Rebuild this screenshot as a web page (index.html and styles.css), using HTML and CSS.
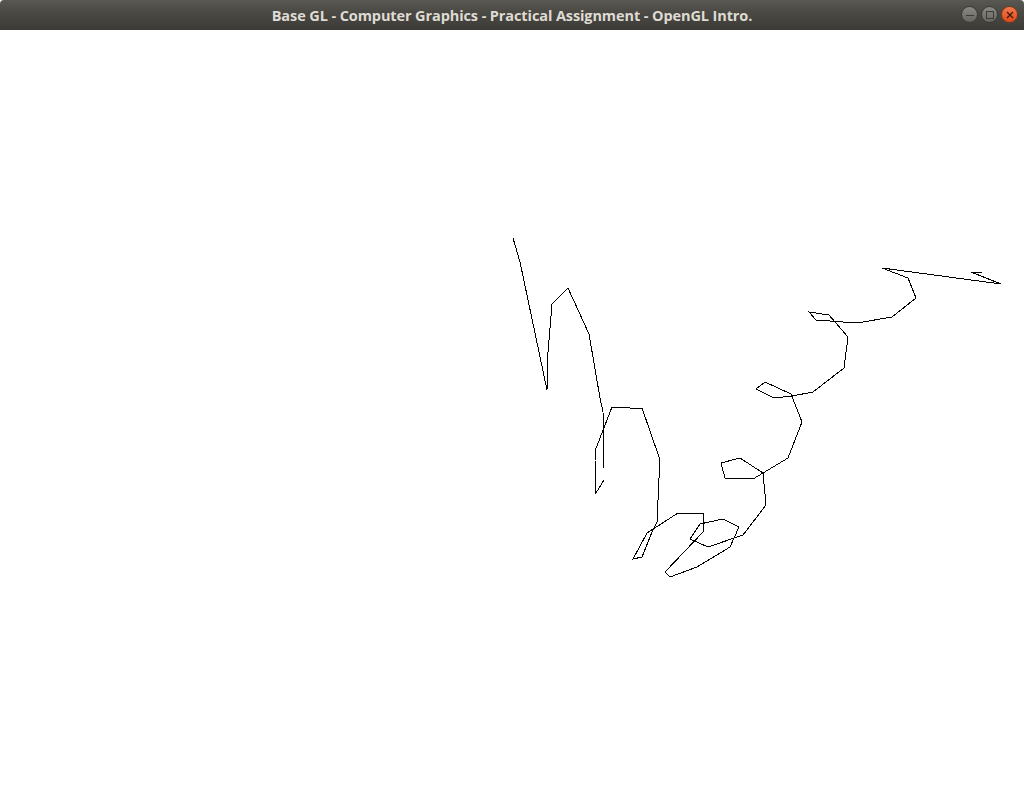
FILE: index.html
```html
<!DOCTYPE html>
<html>
<head>
<meta charset="utf-8">
<link rel="stylesheet" href="styles.css">
</head>
<body>
<div class="window">
  <div class="titlebar">
    <div class="title">Base GL - Computer Graphics - Practical Assignment - OpenGL Intro.</div>
    <div class="controls">
      <span class="btn btn-min"><svg width="8" height="8" viewBox="0 0 8 8"><line x1="0" y1="4.5" x2="8" y2="4.5" stroke="#3c3b37" stroke-width="1"/></svg></span>
      <span class="btn btn-max"><svg width="8" height="8" viewBox="0 0 8 8"><rect x="0.5" y="0.5" width="7" height="7" fill="none" stroke="#3c3b37" stroke-width="1"/></svg></span>
      <span class="btn btn-close"><svg width="8" height="8" viewBox="0 0 8 8"><path d="M1 1 L7 7 M7 1 L1 7" stroke="#3c1a0c" stroke-width="1.3"/></svg></span>
    </div>
  </div>
  <div class="canvas">
    <svg class="gl" width="1024" height="768" viewBox="0 0 1024 768">
      <polyline fill="none" stroke="#000" stroke-width="1" stroke-linejoin="miter" points="513,208 520,232 547,360 548,322 552,274 568,258 589,304 600,368 603,382 604,438 604,450 596,463 595,430 595,421 612,377 630,378 642,378 659,427 659,448 657,492 652,502 642,527 633,529 647,503 678,483 703,483 703,502 665,542 670,547 697,537 730,517 739,497 723,489 700,494 690,509 708,517 743,505 766,475 763,443 753,449 725,448 721,433 740,428 763,443 788,428 802,392 791,364 765,352 756,359 774,368 792,366 813,362 844,338 848,307 829,285 809,282 816,290 857,293 892,287 916,268 908,248 882,238 1001,254 971,242 982,242"/>
    </svg>
  </div>
</div>
</body>
</html>
```

FILE: styles.css
```css
html, body {
  margin: 0;
  padding: 0;
  background: #ffffff;
}

.window {
  width: 1024px;
  height: 798px;
  display: flex;
  flex-direction: column;
  overflow: hidden;
}

.titlebar {
  height: 30px;
  flex: 0 0 30px;
  background: linear-gradient(to bottom, #5a5852 0%, #4a4944 40%, #3c3b37 100%);
  border-radius: 4px 4px 0 0;
  display: flex;
  align-items: center;
  justify-content: center;
  position: relative;
  box-sizing: border-box;
}

.title {
  font-family: "Open Sans", "DejaVu Sans", sans-serif;
  font-weight: 700;
  font-size: 14.5px;
  color: #dfdbd2;
  letter-spacing: -0.1px;
}

.controls {
  position: absolute;
  right: 6px;
  top: 6px;
  display: flex;
  gap: 3px;
}

.btn {
  width: 17px;
  height: 17px;
  border-radius: 50%;
  display: flex;
  align-items: center;
  justify-content: center;
  box-sizing: border-box;
}

.btn-min, .btn-max {
  background: linear-gradient(to bottom, #8a8984, #65645f);
  border: 1px solid #3a3935;
}

.btn-close {
  background: linear-gradient(to bottom, #f37a4c, #e0481a);
  border: 1px solid #7a3a1c;
}

.canvas {
  flex: 1;
  background: #ffffff;
}

.gl {
  display: block;
  shape-rendering: crispEdges;
}
```
